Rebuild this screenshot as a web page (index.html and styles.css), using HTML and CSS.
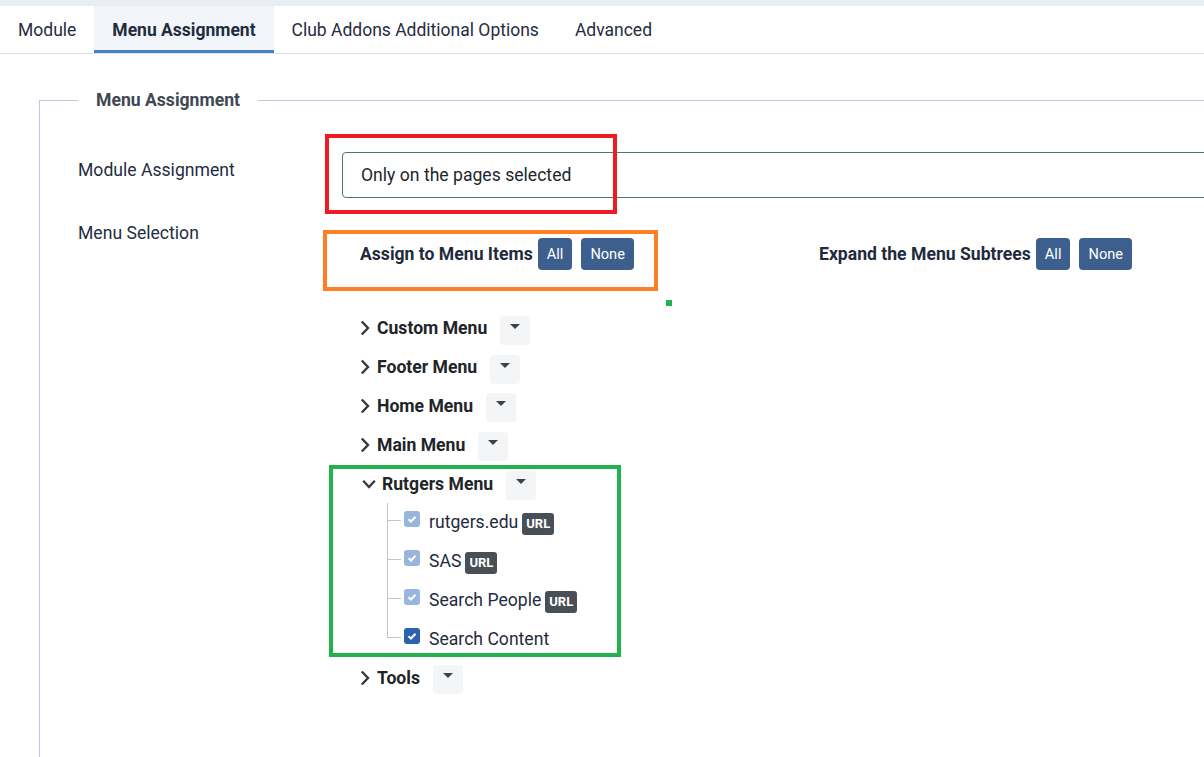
FILE: index.html
```html
<!DOCTYPE html>
<html>
<head>
  <title>Module: Menu Assignment</title>
  <link rel="stylesheet" href="styles.css">
</head>
<body>
  <div class="topbar"></div>
  <nav class="tabs">
    <a class="tab">Module</a>
    <a class="tab active">Menu Assignment</a>
    <a class="tab">Club Addons Additional Options</a>
    <a class="tab">Advanced</a>
  </nav>

  <div class="tab-pane">
    <fieldset class="options">
      <legend>Menu Assignment</legend>

      <div class="control-group first">
        <label class="control-label label-select">Module Assignment</label>
        <div class="controls">
          <div class="select">Only on the pages selected</div>
        </div>
      </div>

      <div class="control-group second">
        <label class="control-label">Menu Selection</label>
        <div class="controls">
          <div class="tree-head">
            <div class="head-group assign">
              <span class="head-title">Assign to Menu Items</span>
              <button class="btn">All</button>
              <button class="btn">None</button>
            </div>
            <div class="head-group">
              <span class="head-title">Expand the Menu Subtrees</span>
              <button class="btn">All</button>
              <button class="btn">None</button>
            </div>
          </div>

          <ul class="tree">
            <li class="row">
              <svg class="chev" width="10" height="16" viewBox="0 0 10 16"><path d="M1.8 1.5 L8 8 L1.8 14.5"/></svg>
              <span class="menu-name">Custom Menu</span>
              <span class="dd"><i></i></span>
            </li>
            <li class="row">
              <svg class="chev" width="10" height="16" viewBox="0 0 10 16"><path d="M1.8 1.5 L8 8 L1.8 14.5"/></svg>
              <span class="menu-name">Footer Menu</span>
              <span class="dd"><i></i></span>
            </li>
            <li class="row">
              <svg class="chev" width="10" height="16" viewBox="0 0 10 16"><path d="M1.8 1.5 L8 8 L1.8 14.5"/></svg>
              <span class="menu-name">Home Menu</span>
              <span class="dd"><i></i></span>
            </li>
            <li class="row">
              <svg class="chev" width="10" height="16" viewBox="0 0 10 16"><path d="M1.8 1.5 L8 8 L1.8 14.5"/></svg>
              <span class="menu-name">Main Menu</span>
              <span class="dd"><i></i></span>
            </li>
            <li class="row open">
              <svg class="chev down" width="14" height="10" viewBox="0 0 14 10"><path d="M1.2 1.8 L7 8 L12.8 1.8"/></svg>
              <span class="menu-name">Rutgers Menu</span>
              <span class="dd"><i></i></span>
            </li>
            <li>
              <ul class="children">
                <li class="row child">
                  <span class="check light"><svg width="10" height="8" viewBox="0 0 10 8"><path d="M1.5 4.2 L4 6.5 L8.5 1.8"/></svg></span>
                  <span>rutgers.edu</span><span class="badge">URL</span>
                </li>
                <li class="row child">
                  <span class="check light"><svg width="10" height="8" viewBox="0 0 10 8"><path d="M1.5 4.2 L4 6.5 L8.5 1.8"/></svg></span>
                  <span>SAS</span><span class="badge">URL</span>
                </li>
                <li class="row child">
                  <span class="check light"><svg width="10" height="8" viewBox="0 0 10 8"><path d="M1.5 4.2 L4 6.5 L8.5 1.8"/></svg></span>
                  <span>Search People</span><span class="badge">URL</span>
                </li>
                <li class="row child">
                  <span class="check"><svg width="10" height="8" viewBox="0 0 10 8"><path d="M1.5 4.2 L4 6.5 L8.5 1.8"/></svg></span>
                  <span>Search Content</span>
                </li>
              </ul>
            </li>
            <li class="row">
              <svg class="chev" width="10" height="16" viewBox="0 0 10 16"><path d="M1.8 1.5 L8 8 L1.8 14.5"/></svg>
              <span class="menu-name">Tools</span>
              <span class="dd"><i></i></span>
            </li>
          </ul>
        </div>
      </div>
    </fieldset>
  </div>

  <!-- highlight marks drawn over the form -->
  <div class="mark mark-red"></div>
  <div class="mark mark-orange"></div>
  <div class="mark mark-dot"></div>
  <div class="mark mark-green"></div>
</body>
</html>
```

FILE: styles.css
```css
* { box-sizing: border-box; }

body {
  margin: 0;
  width: 1204px;
  height: 757px;
  overflow: hidden;
  position: relative;
  font-family: Roboto, "Liberation Sans", sans-serif;
  font-size: 17.6px;
  color: #1f2b3c;
  background: #fff;
}

.topbar { height: 6px; background: #e9eef3; }

.tabs {
  display: flex;
  height: 48px;
  border-bottom: 1px solid #dde3ea;
  font-size: 17.5px;
}
.tab {
  display: flex;
  align-items: center;
  padding: 0 18px;
  height: 47px;
  color: #1f2d40;
}
.tab.active {
  background: #f2f5f9;
  font-weight: bold;
  border-bottom: 3px solid #4b7fc5;
  padding-top: 3px;
}

.tab-pane { padding-top: 36px; }

.options {
  margin: 0 0 0 39px;
  padding: 0 0 120px 38px;
  width: 1400px;
  border: 1px solid #bacbe1;
  border-right: 0;
}
.options legend {
  padding: 0 18px;
  font-size: 17.6px;
  line-height: 20px;
  font-weight: bold;
  color: #3f4853;
}

.control-group { display: flex; }
.control-group.first { margin-top: 42px; }
.control-group.second { margin-top: 23px; }
.control-label {
  flex: 0 0 264px;
  line-height: 24px;
  color: #1f2d40;
}
.label-select { padding-top: 6px; }
.controls { flex: 1; }

.select {
  width: 1000px;
  height: 46px;
  border: 1px solid #4a7e55;
  border-radius: 4px;
  padding-left: 18px;
  display: flex;
  align-items: center;
  color: #22262a;
}

.tree-head {
  display: flex;
  margin-top: 17px;
  padding-left: 18px;
}
.head-group { display: flex; align-items: center; }
.head-group.assign { flex: 0 0 459px; }
.head-title { font-weight: bold; color: #1f2b3c; margin-right: 5px; }
.btn {
  height: 32px;
  padding: 0 9px;
  margin-right: 9px;
  border: 0;
  border-radius: 4px;
  background: #3c5f8d;
  color: #fff;
  font-family: Roboto, "Liberation Sans", sans-serif;
  font-size: 14.6px;
}

.tree {
  list-style: none;
  margin: 39px 0 0;
  padding: 0;
}
.row {
  display: flex;
  align-items: center;
  height: 38.8px;
  padding-left: 18px;
  color: #212529;
}
.menu-name { font-weight: bold; margin-left: 7px; }
.chev { fill: none; stroke: #343a40; stroke-width: 2.4; }
.chev.down { margin-left: 2px; }
.open .menu-name { margin-left: 6px; }

.dd {
  width: 30px;
  height: 29px;
  margin-left: 13px;
  margin-top: 4px;
  border-radius: 4px;
  background: #f4f5f7;
  display: flex;
  justify-content: center;
  padding-top: 8px;
}
.dd i {
  width: 0;
  height: 0;
  border-left: 5px solid transparent;
  border-right: 5px solid transparent;
  border-top: 5px solid #3d434a;
}

.children {
  list-style: none;
  margin: 0 0 0 45px;
  padding: 0;
}
.row.child {
  position: relative;
  padding-left: 17px;
  color: #1f2b3c;
}
/* tree connector lines */
.row.child::before {
  content: "";
  position: absolute;
  left: 0;
  top: 0;
  width: 13px;
  height: calc(50% - 2px);
  border-left: 1px solid #c4c4c4;
  border-bottom: 1px solid #c4c4c4;
}
.row.child:not(:last-child)::after {
  content: "";
  position: absolute;
  left: 0;
  top: 0;
  bottom: 0;
  border-left: 1px solid #c4c4c4;
}

.check {
  width: 16px;
  height: 16px;
  border-radius: 3px;
  background: #2a62b0;
  margin: 0 9px 6px 0;
  display: flex;
  align-items: center;
  justify-content: center;
}
.check.light { background: #98b5de; }
.check svg { fill: none; stroke: #fff; stroke-width: 2; }

.badge {
  margin-left: 4px;
  margin-top: 4px;
  height: 22px;
  line-height: 22px;
  padding: 0 4px;
  border-radius: 3px;
  background: #484f57;
  color: #fff;
  font-size: 13px;
  font-weight: bold;
}

.mark { position: absolute; }
.mark-red { left: 325px; top: 134px; width: 292px; height: 80px; border: 4px solid #ed1c24; }
.mark-orange { left: 323px; top: 230px; width: 335px; height: 61px; border: 4px solid #ff7f27; }
.mark-dot { left: 666px; top: 300px; width: 6px; height: 6px; background: #22b14c; }
.mark-green { left: 329px; top: 465px; width: 292px; height: 192px; border: 4px solid #22b14c; }
```
